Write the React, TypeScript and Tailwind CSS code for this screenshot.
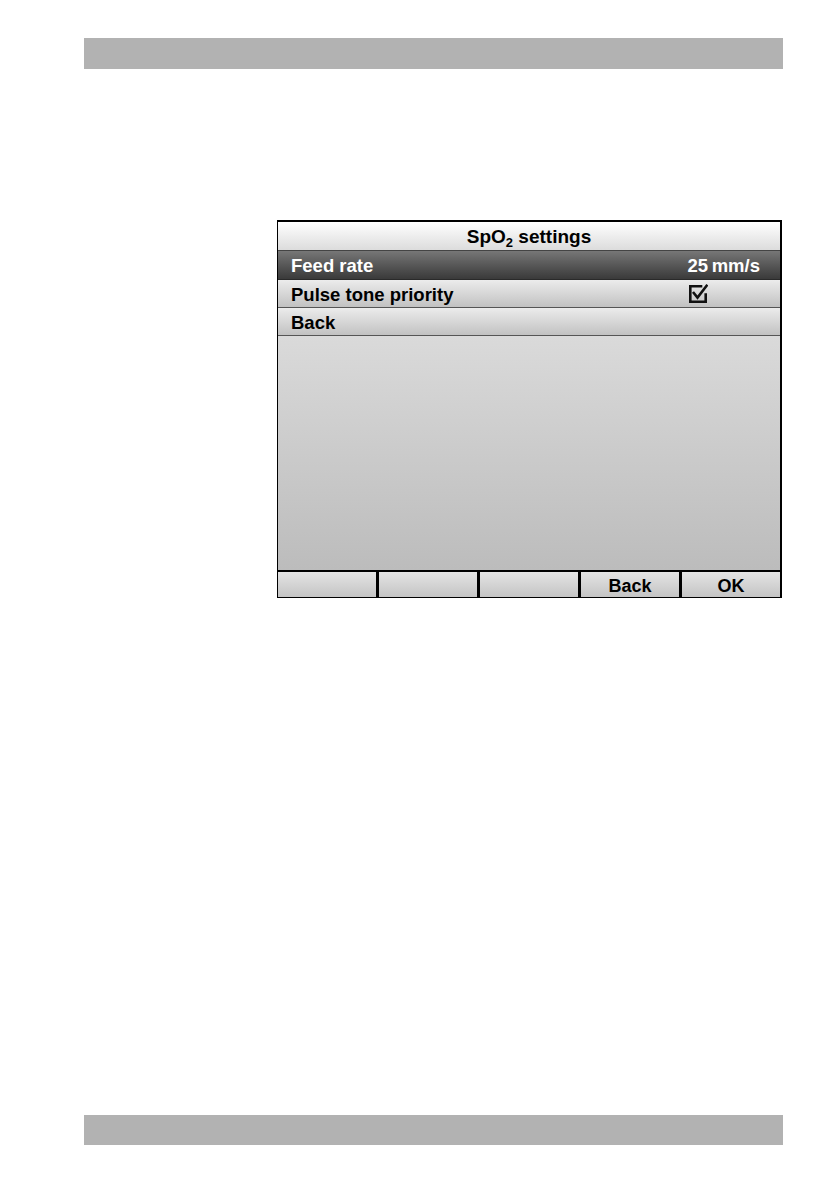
const FONT = { fontFamily: '"Liberation Sans", Arial, sans-serif' };

const CheckIcon = () => (
  <svg width="20" height="20" viewBox="0 0 20 20" fill="none" stroke="#111" strokeWidth="2.6">
    <path d="M13 2.3 H2.3 V17.7 H17.7 V10.5" strokeLinecap="square" />
    <path d="M5.8 9 L9.5 13.6 L18.6 1.8" strokeLinecap="square" />
  </svg>
);

const MenuRow = ({
  label,
  value,
  active,
}: {
  label: string;
  value?: React.ReactNode;
  active?: boolean;
}) => (
  <div
    className={
      active
        ? "flex h-[29px] items-center justify-between border-b border-[#2a2a2a] bg-gradient-to-b from-[#777] to-[#3a3a3a] pl-[13px] pr-[20px] pt-[3px] text-white"
        : "flex h-[28px] items-center justify-between border-b border-[#555] bg-gradient-to-b from-[#ececec] to-[#c2c2c2] pl-[13px] pr-[20px] pt-[3px] text-black"
    }
  >
    <span className="text-[18.5px] font-bold leading-none">{label}</span>
    {value}
  </div>
);

const FooterButton = ({ label, last }: { label?: string; last?: boolean }) => (
  <div
    className={
      "flex flex-1 items-center justify-center bg-gradient-to-b from-[#e4e4e4] to-[#c4c4c4] pt-[3px] text-[18px] font-bold text-black " +
      (last ? "" : "border-r-[3px] border-black")
    }
  >
    {label}
  </div>
);

export default function App() {
  return (
    <div className="flex h-[1190px] w-[838px] flex-col bg-white" style={FONT}>
      {/* page header bar */}
      <div className="ml-[84px] mt-[38px] h-[31px] w-[699px] bg-[#b2b2b2]" />

      {/* device screen */}
      <div className="ml-[277px] mt-[151px] flex w-[505px] flex-col border-b border-l border-r-2 border-t-2 border-black">
        <div className="flex h-[29px] items-center justify-center border-b border-[#444] bg-gradient-to-b from-white to-[#dcdcdc] pt-[3px] text-[19px] font-bold text-black">
          <span>
            SpO<sub className="text-[13px]">2</sub> settings
          </span>
        </div>
        <MenuRow
          label="Feed rate"
          active
          value={<span className="text-[18.5px] font-bold leading-none">25&#8201;mm/s</span>}
        />
        <MenuRow
          label="Pulse tone priority"
          value={
            <span className="-mt-[3px] mr-[52px] flex">
              <CheckIcon />
            </span>
          }
        />
        <MenuRow label="Back" />
        <div className="h-[234px] bg-gradient-to-b from-[#dadada] to-[#bcbcbc]" />
        <div className="flex h-[27px] border-t-2 border-black">
          <FooterButton />
          <FooterButton />
          <FooterButton />
          <FooterButton label="Back" />
          <FooterButton label="OK" last />
        </div>
      </div>

      {/* page footer bar */}
      <div className="ml-[84px] mt-[517px] h-[30px] w-[699px] bg-[#b2b2b2]" />
    </div>
  );
}
